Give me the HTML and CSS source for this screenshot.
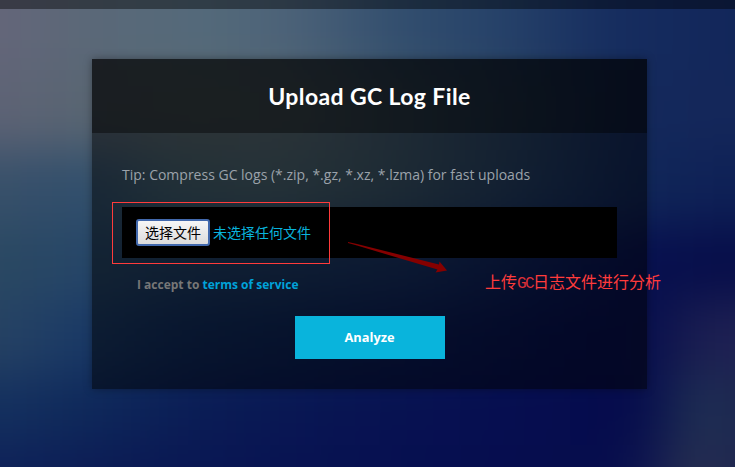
FILE: index.html
```html
<!DOCTYPE html>
<html lang="zh-CN">
<head>
<meta charset="utf-8">
<title>Upload GC Log File</title>
<link rel="stylesheet" href="styles.css">
</head>
<body>
<div class="backdrop-clip">
  <div class="backdrop">
    <div class="band band-1"></div>
    <div class="band band-2"></div>
    <div class="band band-3"></div>
    <div class="band band-4"></div>
    <div class="band band-5"></div>
    <div class="band band-6"></div>
    <div class="band band-7"></div>
  </div>
</div>
<header class="topbar"></header>
<main class="page">
  <section class="panel">
    <h1 class="panel-title">Upload GC Log File</h1>
    <form class="panel-body">
      <p class="tip">Tip: Compress GC logs (*.zip, *.gz, *.xz, *.lzma) for fast uploads</p>
      <div class="file-field">
        <button class="choose" type="button">选择文件</button>
        <span class="file-name">未选择任何文件</span>
      </div>
      <p class="terms">I accept to <a class="terms-link" href="#">terms of service</a></p>
      <button class="analyze" type="button">Analyze</button>
    </form>
    <div class="highlight"></div>
    <svg class="arrow" width="102" height="34" viewBox="0 0 102 34"><path d="M1 1 L10 3 L92 23.500 L92.500 20.500 L100 29.500 L88.500 31.500 L90.500 28.500 L10 4.600 L1 2 Z" fill="#850000"/></svg>
    <div class="note">上传<span class="note-latin">GC</span>日志文件进行分析</div>
  </section>
</main>
</body>
</html>
```
FILE: styles.css
```css
* { box-sizing: border-box; }
body {
  position: relative;
  margin: 0;
  height: 467px;
  overflow: hidden;
  background: #0a1650;
  font-family: "Open Sans", "Noto Sans CJK SC", sans-serif;
}

/* Soft colour wash: horizontal gradients blended vertically by the blur */
.backdrop-clip {
  position: absolute;
  inset: 0;
  z-index: -1;
  overflow: hidden;
}
.backdrop {
  width: 855px;
  height: 587px;
  margin: -60px 0 0 -60px;
  display: grid;
  grid-template-rows: 130px 80px 75px 75px 75px 70px 1fr;
  filter: blur(24px);
}
.band-1 { background: linear-gradient(90deg, #646679 60px, #5a6878 150px, #546a7a 260px, #4c6278 350px, #324e6e 460px, #264269 560px, #162d5f 670px, #12265a 795px); }
.band-2 { background: linear-gradient(90deg, #5e6375 60px, #586572 150px, #5b696f 250px, #566770 350px, #3f566a 460px, #263f60 590px, #13285b 700px, #14275a 795px); }
.band-3 { background: linear-gradient(90deg, #38506a 60px, #304e6c 150px, #42606f 230px, #4a6470 330px, #3a5569 460px, #1f3a62 600px, #102658 700px, #0e2056 795px); }
.band-4 { background: linear-gradient(90deg, #2a4862 60px, #264668 150px, #1f3e65 260px, #1c3965 360px, #163064 480px, #0b1d5a 600px, #070f4e 710px, #070e49 795px); }
.band-5 { background: linear-gradient(90deg, #264263 60px, #1a3a66 140px, #102c5e 240px, #0c2459 360px, #0a1a55 500px, #060f50 640px, #080f4c 710px, #1d2052 765px, #1e2052 795px); }
.band-6 { background: linear-gradient(90deg, #14305f 60px, #0e285a 150px, #0a1c55 260px, #081452 400px, #060e50 560px, #050b4c 700px, #1c2b52 750px, #213454 765px, #1c2650 795px); }
.band-7 { background: linear-gradient(90deg, #0e2158 60px, #0b1a54 180px, #081352 340px, #060e50 500px, #060c4c 670px, #101850 710px, #2a3150 750px, #1e2650 795px); }

.topbar { height: 9px; background: rgba(0, 0, 0, .42); }
.page { padding: 50px 88px 0 92px; }
.panel {
  position: relative;
  width: 555px;
  height: 330px;
  background: rgba(0, 0, 0, .5);
  box-shadow: 0 0 8px rgba(0, 0, 0, .35);
}
.panel-title {
  margin: 0;
  height: 74px;
  background: rgba(0, 0, 0, .4);
  color: #fff;
  font: 700 23px/74px Lato, sans-serif;
  letter-spacing: .38px;
  text-align: center;
}
.panel-body {
  display: flex;
  flex-direction: column;
  padding: 31px 30px 0;
}
.tip { margin: 0 0 22px; color: #9ba2aa; font-size: 14px; line-height: 21px; white-space: nowrap; }
.file-field {
  display: flex;
  align-items: center;
  gap: 3px;
  height: 51px;
  padding-left: 14px;
  background: #000;
}
.choose {
  width: 74px;
  height: 27px;
  padding: 0 0 2px;
  border: 2px solid #4269ad;
  border-radius: 3px;
  background: linear-gradient(#f6f6f6, #dcdcdc);
  color: #000;
  font: 14px/20px "Noto Sans CJK SC", sans-serif;
}
.file-name { padding-bottom: 2px; color: #09b3dc; font: 14px/24px "Noto Sans CJK SC", sans-serif; }
.terms { margin: 18px 0 0 15px; color: #777; font-size: 12px; font-weight: 700; line-height: 18px; }
.terms-link { color: #00a2d9; text-decoration: none; }
.analyze {
  align-self: center;
  width: 150px;
  height: 43px;
  margin-top: 22px;
  padding: 0;
  border: 0;
  background: #09b4dc;
  color: #fff;
  font: 700 12.8px/43px "Open Sans", sans-serif;
}
.highlight {
  position: absolute;
  left: 20px;
  top: 143px;
  width: 218px;
  height: 62px;
  border: 1px solid #ff3b3b;
}
.arrow { position: absolute; left: 255px; top: 182px; }
.note {
  position: absolute;
  left: 393px;
  top: 210px;
  color: #ff3b3b;
  font: 400 16px/24px "Noto Sans CJK SC", sans-serif;
  white-space: nowrap;
}
.note-latin { color: #dc3038; font-family: "Liberation Mono", monospace; letter-spacing: -1.6px; }
```
